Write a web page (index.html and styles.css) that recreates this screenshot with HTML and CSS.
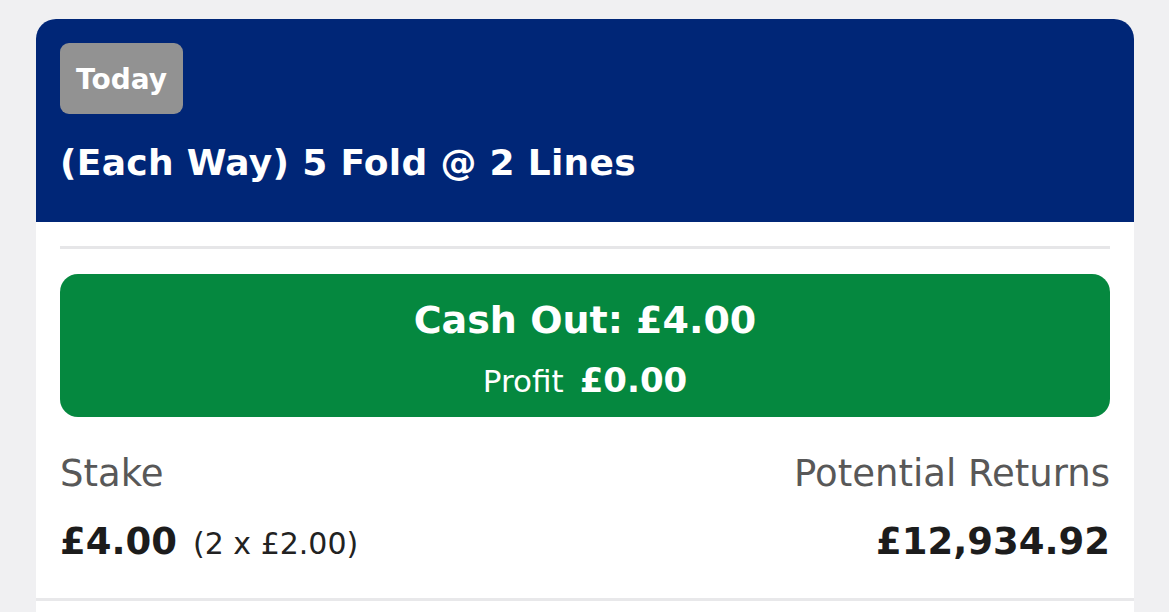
FILE: index.html
```html
<!DOCTYPE html>
<html lang="en">
<head>
<meta charset="utf-8">
<title>Bet</title>
<link rel="stylesheet" href="styles.css">
</head>
<body>
<div class="page">
  <div class="card">
    <div class="card-head">
      <span class="badge">Today</span>
      <h1 class="title">(Each Way) 5 Fold @ 2 Lines</h1>
    </div>
    <div class="card-body">
      <div class="divider"></div>
      <button class="cashout">
        <span class="cashout-main">Cash Out: £4.00</span>
        <span class="cashout-profit"><span class="profit-label">Profit</span><span class="profit-value">£0.00</span></span>
      </button>
      <div class="summary">
        <div class="col">
          <div class="label">Stake</div>
          <div class="value-row"><span class="value">£4.00</span><span class="sub">(2 x £2.00)</span></div>
        </div>
        <div class="col right">
          <div class="label">Potential Returns</div>
          <div class="value-row"><span class="value">£12,934.92</span></div>
        </div>
      </div>
    </div>
  </div>
  <div class="next-card"></div>
</div>
</body>
</html>
```

FILE: styles.css
```css
* { box-sizing: border-box; }
html, body { margin: 0; padding: 0; }
body {
  background: #f0f0f2;
  font-family: "DejaVu Sans", "Noto Sans", sans-serif;
  width: 1169px;
  height: 612px;
  overflow: hidden;
}
.page {
  padding: 19px 35px 0 36px;
}
.card {
  background: #fff;
  border-radius: 20px 20px 0 0;
  overflow: hidden;
  border-bottom: 3px solid #e8e8ea;
}
.card-head {
  background: #002677;
  padding: 24px 24px 0 24px;
  height: 203px;
}
.badge {
  display: inline-flex;
  align-items: center;
  justify-content: center;
  width: 123px;
  height: 71px;
  background: #929292;
  color: #fff;
  border-radius: 9px;
  font-size: 28px;
  font-weight: 700;
  padding-top: 1px;
}
.title {
  margin: 27px 0 0 0;
  color: #fff;
  font-size: 36px;
  font-weight: 700;
  letter-spacing: 0.3px;
  line-height: 44px;
}
.card-body {
  padding: 24px 24px 0 24px;
  height: 376px;
}
.divider {
  height: 3px;
  background: #e6e6e8;
}
.cashout {
  margin-top: 25px;
  width: 100%;
  height: 143px;
  border: 0;
  border-radius: 18px;
  background: #05883f;
  color: #fff;
  font-family: inherit;
  display: flex;
  flex-direction: column;
  align-items: center;
  justify-content: flex-start;
  gap: 14px;
  padding: 22px 0 0 0;
}
.cashout-main {
  font-size: 38px;
  font-weight: 700;
  line-height: 48px;
}
.cashout-profit {
  display: flex;
  align-items: baseline;
  gap: 16px;
  line-height: 44px;
}
.profit-label { font-size: 31px; font-weight: 400; }
.profit-value { font-size: 34px; font-weight: 700; }
.summary {
  display: flex;
  justify-content: space-between;
  margin-top: 34px;
}
.col { display: flex; flex-direction: column; gap: 20px; }
.col.right { align-items: flex-end; }
.label {
  font-size: 37px;
  color: #585858;
  line-height: 46px;
}
.value-row {
  display: flex;
  align-items: baseline;
  gap: 16px;
  line-height: 50px;
}
.value {
  font-size: 37px;
  font-weight: 700;
  color: #1c1c1c;
}
.sub {
  font-size: 30px;
  font-weight: 400;
  color: #222;
}
.next-card {
  background: #fff;
  height: 40px;
}
```
